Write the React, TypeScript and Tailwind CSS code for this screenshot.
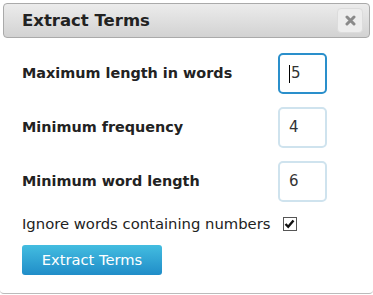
import React from "react";

const font = { fontFamily: '"DejaVu Sans", Verdana, sans-serif' };

function Row({ label, value, focused }: { label: string; value: string; focused?: boolean }) {
  return (
    <div className="flex items-center h-[41px] justify-between pr-[43px]">
      <span className="font-bold text-[14.4px] text-[#222]">{label}</span>
      <div
        className={
          "w-[49px] h-[41px] rounded-[5px] border-2 flex items-center pl-[9px] text-[15px] text-[#333] " +
          (focused ? "border-[#2a8fcb]" : "border-[#cfe3ee]")
        }
      >
        {focused && <span className="w-px h-[18px] bg-black mr-[1px]" />}
        {value}
      </div>
    </div>
  );
}

export default function App() {
  return (
    <div className="w-[373px] h-[295px] bg-white" style={font}>
      <div className="w-[373px] h-[294px] border-b border-[#bbb] rounded-b-[4px] pt-[3px] px-[3px]">
        <div className="h-[35px] rounded-[4px] border border-[#aaa] bg-gradient-to-b from-[#ececec] to-[#d2d2d2] flex items-center justify-between pl-[18px] pr-[6px]">
          <span className="font-bold text-[16.5px] text-[#222] pt-[2px]">Extract Terms</span>
          <div className="w-[26px] h-[25px] rounded-[4px] bg-[#ededed] border border-[#dcdcdc] flex items-center justify-center">
            <svg width="11" height="11" viewBox="0 0 11 11">
              <path d="M2 2 L9 9 M9 2 L2 9" stroke="#8a8a8a" strokeWidth="3" strokeLinecap="round" />
            </svg>
          </div>
        </div>
        <div className="pl-[19px] pt-[15px] flex flex-col gap-[13px]">
          <Row label="Maximum length in words" value="5" focused />
          <Row label="Minimum frequency" value="4" />
          <Row label="Minimum word length" value="6" />
        </div>
        <div className="pl-[19px] mt-[14px] flex items-center gap-[12px] h-[16px]">
          <span className="text-[14.8px] text-[#222]">Ignore words containing numbers</span>
          <div className="w-[14px] h-[14px] border border-[#555] flex items-center justify-center bg-white">
            <svg width="11" height="10" viewBox="0 0 11 10">
              <path d="M1.5 5 L4.2 7.8 L9.5 1.5" stroke="#111" strokeWidth="2.4" fill="none" />
            </svg>
          </div>
        </div>
        <div className="pl-[19px] mt-[13px]">
          <button className="w-[140px] h-[30px] rounded-[3px] bg-gradient-to-b from-[#43bde0] to-[#208dc8] text-white text-[14.7px]">
            Extract Terms
          </button>
        </div>
      </div>
    </div>
  );
}
